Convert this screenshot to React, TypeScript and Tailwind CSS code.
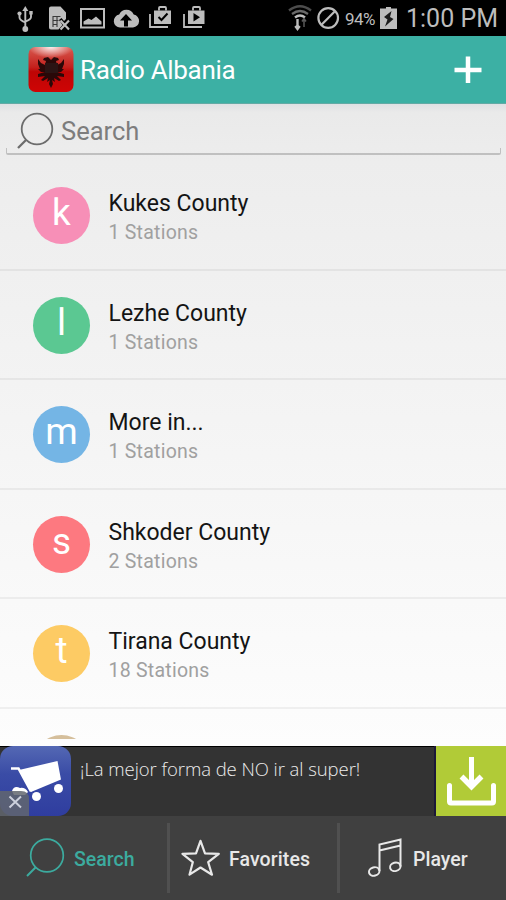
import React from 'react';

interface County {
  name: string;
  stations: string;
  letter: string;
  color: string;
}

const counties: County[] = [
  { name: 'Kukes County', stations: '1 Stations', letter: 'k', color: 'bg-[#f78fb7]' },
  { name: 'Lezhe County', stations: '1 Stations', letter: 'l', color: 'bg-[#5bc892]' },
  { name: 'More in...', stations: '1 Stations', letter: 'm', color: 'bg-[#74b5e5]' },
  { name: 'Shkoder County', stations: '2 Stations', letter: 's', color: 'bg-[#fd7980]' },
  { name: 'Tirana County', stations: '18 Stations', letter: 't', color: 'bg-[#fdcb64]' },
];

const StatusBar: React.FC = () => (
  <div className="flex h-9 shrink-0 items-center bg-black pr-[8px] text-[#bdbdbd]">
    <svg width="210" height="36" viewBox="0 0 210 36" fill="none" stroke="currentColor">
      {/* usb */}
      <g strokeWidth="1.9">
        <path d="M25.300 10v17M19.500 14v3.500q0 2.500 5.800 5M31 13v4q0 2.500-5.700 4.500" />
        <path d="M25.300 6l3 5h-6z" fill="currentColor" stroke="none" />
        <circle cx="25.300" cy="29" r="2.900" fill="currentColor" stroke="none" />
        <circle cx="19.500" cy="13.500" r="2.100" fill="currentColor" stroke="none" />
        <path d="M29.300 11h3.400v3.400h-3.400z" fill="currentColor" stroke="none" />
      </g>
      {/* sim card missing */}
      <path d="M49 8.500q0-2 2-2h9.500l5.500 6V19l-2 2-2.500-3-2.500 2 3.500 5-4 4.500H51q-2 0-2-2z" fill="currentColor" stroke="none" />
      <path d="M52.500 16.500h8M52.500 20.500h6M52.500 24.500h5M53 16v11M57 16v11" stroke="#3a3a3a" strokeWidth="1.100" />
      <path d="M60.500 20.500l8.500 9M69 20.500l-8.500 9" strokeWidth="2.200" />
      {/* picture */}
      <path d="M81 9h23v18.500H81z" strokeWidth="2" />
      <path d="M83.500 24.500v-3l5-3 3 1.500 4.500-3.500 5.500 5v3z" fill="currentColor" stroke="none" />
      {/* cloud upload */}
      <path d="M120 27.500a6.500 6.500 0 0 1-.8-12.900 7.800 7.800 0 0 1 14.500 0 6.500 6.500 0 0 1-.7 12.900z" fill="currentColor" stroke="none" />
      <path d="M126 14l6 6.500h-4v6h-4v-6h-4z" fill="#000" stroke="none" />
      {/* shopping bags */}
      <path d="M154 10.500h17V24h-17z" fill="currentColor" stroke="none" />
      <path d="M159 10.500V8q0-1 1-1h5q1 0 1 1v2.500M150 14v13h18" strokeWidth="1.800" />
      <path d="M158.500 17l3 3 6-6.500" stroke="#000" strokeWidth="2" />
      <path d="M188 10.500h16.500V24H188z" fill="currentColor" stroke="none" />
      <path d="M193 10.500V8q0-1 1-1h5q1 0 1 1v2.500M184 14v13h18" strokeWidth="1.800" />
      <path d="M193.500 13l6.500 4.200-6.500 4.300z" fill="#000" stroke="none" />
    </svg>
    <div className="flex-1" />
    <svg width="56" height="36" viewBox="286 0 56 36" fill="none" stroke="currentColor">
      <path d="M289 10.500q11-8.500 22 0" stroke="#4c4c4c" strokeWidth="2.400" />
      <path d="M292 14q8-6 16 0" stroke="#6a6a6a" strokeWidth="2.200" />
      <path d="M295 17.500q5-4 10 0" strokeWidth="2.400" />
      <path d="M297.500 19v9M295.300 26l2.200 3 2.200-3" strokeWidth="2.400" />
      <path d="M304 27v-8M302 21.500l2-3 2 3" stroke="#5a5a5a" strokeWidth="1.500" />
      <circle cx="328.200" cy="18" r="9.800" strokeWidth="2.200" />
      <path d="M321.500 24.700l13.400-13.400" strokeWidth="2.200" />
    </svg>
    <span className="ml-[3px] w-[32px] pt-[2px] text-[17px] leading-9 tracking-[-0.5px]">94%</span>
    <svg className="ml-[3px]" width="18" height="36" viewBox="0 0 18 36">
      <path d="M0 8.500h6V7h5v1.500h6V29H0z" fill="currentColor" />
      <path d="M11.500 11L4 17l3.500 2.500L5 26.500l8.500-7.500-3.500-2z" fill="#1c1c1c" />
    </svg>
    <span className="ml-[8px] w-[92px] whitespace-nowrap pt-px text-right text-[25px] leading-9">1:00 PM</span>
  </div>
);

const FlagIcon: React.FC = () => (
  <svg width="46" height="45" viewBox="0 0 46 45">
    <defs>
      <linearGradient id="flag" x1="0" y1="0" x2="0" y2="1">
        <stop offset="0" stopColor="#d85a50" />
        <stop offset="0.450" stopColor="#c4201c" />
        <stop offset="0.550" stopColor="#be0505" />
        <stop offset="1" stopColor="#cf0505" />
      </linearGradient>
      <radialGradient id="shine" cx="0.500" cy="0" r="0.500">
        <stop offset="0" stopColor="#fff" stopOpacity="0.900" />
        <stop offset="1" stopColor="#fff" stopOpacity="0" />
      </radialGradient>
    </defs>
    <rect x="0.500" width="45" height="45" rx="7" fill="url(#flag)" />
    <path
      d="M23 13l-3-3-4 1-1 2 3 1-1 4-4-2-3-4v5l2 5h-2l3 3 4 0-7 2v3l7-1-4 4 2 1 5-3-1 4 3-2-1 4 2 4 2-4-1-4 3 2-1-4 5 3 2-1-4-4 7 1v-3l-7-2 4 0 3-3h-2l2-5v-5l-3 4-4 2-1-4 3-1-1-2-4-1z"
      fill="#2a0808"
    />
    <rect x="17" y="16" width="13" height="10" fill="#2a1414" />
    <rect x="0.500" width="45" height="22" rx="7" fill="url(#shine)" />
  </svg>
);

const Header: React.FC = () => (
  <div className="flex h-[68px] shrink-0 items-center border-b border-[#63aaa5] bg-[#3cb0a4] pl-[28px] pr-[24px]">
    <FlagIcon />
    <h1 className="ml-[6px] flex-1 text-[26px] leading-[68px] tracking-[-0.3px] text-white">Radio Albania</h1>
    <svg width="28" height="28" viewBox="0 0 28 28" stroke="#fff" strokeWidth="4.500">
      <path d="M14 0.500v26.500M0.500 14h27" />
    </svg>
  </div>
);

const SearchField: React.FC = () => (
  <div className="h-[57px] shrink-0 bg-gradient-to-b from-[#dfe1e4] from-0% via-[#eaeaea] via-15% to-[#ededed] pl-[6px] pr-[5px]">
    <div className="flex h-[51px] items-center">
      <svg className="ml-[10px] mt-[2px]" width="38" height="38" viewBox="0 0 38 38" fill="none" stroke="#6c6c6c" strokeWidth="1.800">
        <circle cx="21" cy="17" r="15.300" />
        <path d="M10 28l-8 8" strokeWidth="2.300" />
      </svg>
      <span className="ml-[7px] pt-[3px] text-[25.500px] leading-[51px] text-[#7d7d7d]">Search</span>
    </div>
    <div className="-mt-[7px] h-[7px] rounded-b-[2px] border-x border-b-2 border-[#c0c0c0]" />
  </div>
);

const CountyRow: React.FC<{ county: County }> = ({ county }) => (
  <li className="flex h-[109.6px] shrink-0 items-start border-b-2 border-black/5 pl-[33px]">
    <div className={`mt-[26px] h-[57px] w-[57px] rounded-full text-center text-[37px] leading-[52px] text-white ${county.color}`}>
      {county.letter}
    </div>
    <div className="ml-[18.5px] mt-[29px]">
      <p className="text-[23px] leading-[28px] text-[#141414]">{county.name}</p>
      <p className="text-[19.5px] leading-[30px] tracking-[0.25px] text-[#a0a0a0]">{county.stations}</p>
    </div>
  </li>
);

const AdBanner: React.FC = () => (
  <div className="flex h-[70px] shrink-0 border-t border-black bg-[#333333]">
    <svg className="-mt-px" width="71" height="70" viewBox="0 0 71 70">
      <defs>
        <linearGradient id="cart" x1="0" y1="0" x2="0" y2="1">
          <stop offset="0" stopColor="#5468b4" />
          <stop offset="0.400" stopColor="#3a4ca6" />
          <stop offset="1" stopColor="#2f3d9f" />
        </linearGradient>
      </defs>
      <rect width="71" height="70" rx="13" fill="url(#cart)" />
      <path d="M11 22.500h7.500l12.500 23" fill="none" stroke="#fff" strokeWidth="2.500" />
      <path d="M19 24l38.500-9 3.500 18.500L31 46z" fill="#fff" />
      <path d="M12 45q2-6 8-3 5-1 8 4l-3 3H14z" fill="#fff" />
      <circle cx="36.500" cy="50.500" r="4.500" fill="#fff" />
      <circle cx="58.500" cy="42.500" r="4.500" fill="#fff" />
      <path d="M0 45h21q8 0 8 8v17H0z" fill="#62666f" fillOpacity="0.850" />
      <path d="M9.500 50.500l11.500 11M21 50.500l-11.500 11" stroke="#ccd0dd" strokeWidth="2" />
    </svg>
    <p className="ml-[9px] flex-1 whitespace-nowrap pt-[8px] font-['Open_Sans'] text-[18.5px] font-light leading-[28px] tracking-[-0.06px] text-[#ececec]">
      ¡La mejor forma de NO ir al super!
    </p>
    <div className="-mt-px h-[71px] w-[72px] border-b border-l-2 border-[#1c1838] bg-[#b1cb37]">
      <svg width="70" height="70" viewBox="0 0 70 70" fill="none" stroke="#fff" strokeWidth="5">
        <path d="M35.500 11v28" />
        <path d="M25.500 30.500l10 10 10-10" strokeWidth="5.500" />
        <path d="M13.500 39.500v16q0 1.500 1.500 1.500h41q1.500 0 1.500-1.500v-16" strokeLinecap="round" />
      </svg>
    </div>
  </div>
);

const BottomNav: React.FC = () => (
  <nav className="flex h-[84px] shrink-0 items-center bg-[#404040] text-[19.5px] font-medium text-[#e8e8e8]">
    <div className="flex w-[167px] items-center pl-[26px] text-[#3cab9f]">
      <svg width="39" height="40" viewBox="0 0 39 40" fill="none" stroke="currentColor" strokeWidth="1.700">
        <circle cx="21" cy="17.500" r="16.300" />
        <path d="M9.500 29.500L1 38" strokeWidth="2" />
      </svg>
      <span className="ml-[9px] pt-[3px]">Search</span>
    </div>
    <div className="h-[70px] w-[3px] bg-[#505050]" />
    <div className="flex w-[167px] items-center pl-[11px]">
      <svg width="40" height="38" viewBox="0 0 40 38" fill="none" stroke="currentColor" strokeWidth="2.200" strokeLinejoin="round">
        <path d="M19.500 1.800L24 14.300l13.800.5L27.200 23.200l3.800 12.500L19.500 28.500 8.500 35.700l3.300-12.500L1.500 14.800l13.500-.5z" />
      </svg>
      <span className="ml-[8px] pt-[3px] tracking-[0.1px]">Favorites</span>
    </div>
    <div className="h-[70px] w-[3px] bg-[#505050]" />
    <div className="flex items-center pl-[27px]">
      <svg width="35" height="40" viewBox="0 0 35 40" fill="none" stroke="currentColor" strokeWidth="2">
        <path d="M12.500 33V6.500L33.500 1.500v27M12.500 12.500l21-5" />
        <ellipse cx="7.200" cy="33.500" rx="5.300" ry="4.200" transform="rotate(-15 7.200 33.500)" />
        <ellipse cx="28.300" cy="28.800" rx="5.300" ry="4.200" transform="rotate(-15 28.300 28.800)" />
      </svg>
      <span className="ml-[11px] pt-[3px]">Player</span>
    </div>
  </nav>
);

const App: React.FC = () => {
  return (
    <div className="flex h-[900px] w-[506px] flex-col overflow-hidden bg-[#fcfcfc] font-['Roboto',sans-serif]">
      <StatusBar />
      <Header />
      <SearchField />
      <div className="h-[585px] shrink-0 bg-gradient-to-b from-[#ededed] to-[#fdfdfd]">
        <ul className="flex h-[578px] flex-col overflow-hidden">
          {counties.map((county) => (
            <CountyRow key={county.name} county={county} />
          ))}
          {/* next row, scrolled mostly out of view */}
          <li className="shrink-0 pl-[33px] pt-[26px]">
            <div className="h-[57px] w-[57px] rounded-full bg-[#d5bf9c]" />
          </li>
        </ul>
      </div>
      <AdBanner />
      <BottomNav />
    </div>
  );
};

export default App;
